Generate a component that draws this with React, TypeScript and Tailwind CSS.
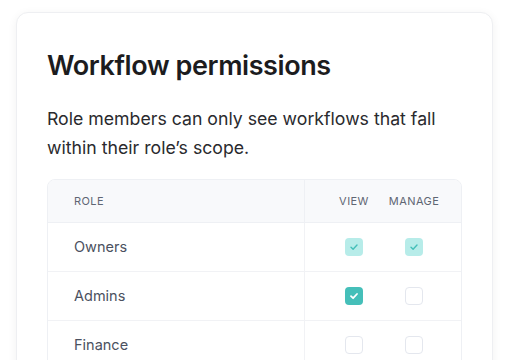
import React from "react";

type Row = { role: string; view: "off" | "on" | "muted"; manage: "off" | "on" | "muted" };

const rows: Row[] = [
  { role: "Owners", view: "muted", manage: "muted" },
  { role: "Admins", view: "on", manage: "off" },
  { role: "Finance", view: "off", manage: "off" },
];

function Check({ state }: { state: "off" | "on" | "muted" }) {
  if (state === "off") {
    return <span className="block w-[18px] h-[18px] rounded-[4px] border border-[#e4e7ee] bg-white" />;
  }
  const muted = state === "muted";
  return (
    <span
      className={
        muted
          ? "flex items-center justify-center w-[18px] h-[18px] rounded-[4px] bg-[#b7ece9]"
          : "flex items-center justify-center w-[18px] h-[18px] rounded-[4px] bg-[#45bfb9]"
      }
    >
      <svg width="10" height="10" viewBox="0 0 10 10" fill="none">
        <path
          d="M2 5.2 4.1 7.2 8 3"
          stroke={muted ? "#45bfb9" : "#ffffff"}
          strokeWidth={muted ? 1.4 : 1.8}
          strokeLinecap="round"
          strokeLinejoin="round"
        />
      </svg>
    </span>
  );
}

export default function App() {
  return (
    <div className="min-h-screen bg-white pt-3 px-4" style={{ fontFamily: "Inter, 'Noto Sans', sans-serif" }}>
      <div className="rounded-xl border border-[#eeeff2] bg-white shadow-[0_2px_10px_rgba(0,0,0,0.06)] px-[30px] pt-[36px] pb-10">
        <h1 className="text-[27px] leading-[34px] font-semibold text-[#1c1c1e] tracking-[-0.015em]">
          Workflow permissions
        </h1>
        <p className="mt-[21px] text-[17.7px] leading-[29px] text-[#2a2a2e]">
          Role members can only see workflows that fall within their role’s scope.
        </p>
        <div className="mt-[17px] rounded-lg border border-[#eef0f4] overflow-hidden">
          <div className="flex h-[43px] bg-[#f8f9fb] border-b border-[#eef0f4] text-[11px] tracking-[0.04em] text-[#5f6673] uppercase">
            <div className="w-[257px] flex items-center pl-[26px] border-r border-[#eef0f4]">Role</div>
            <div className="flex-1 flex items-center justify-end pr-[17px]">
              <div className="w-[60px] text-center">View</div>
              <div className="w-[60px] text-center">Manage</div>
            </div>
          </div>
          {rows.map((r) => (
            <div key={r.role} className="flex h-[49px] border-b border-[#f1f2f5] text-[14.5px] text-[#4b5160]">
              <div className="w-[257px] flex items-center pl-[26px] border-r border-[#f1f2f5]">{r.role}</div>
              <div className="flex-1 flex items-center justify-end pr-[17px]">
                <div className="w-[60px] flex justify-center">
                  <Check state={r.view} />
                </div>
                <div className="w-[60px] flex justify-center">
                  <Check state={r.manage} />
                </div>
              </div>
            </div>
          ))}
        </div>
      </div>
    </div>
  );
}
